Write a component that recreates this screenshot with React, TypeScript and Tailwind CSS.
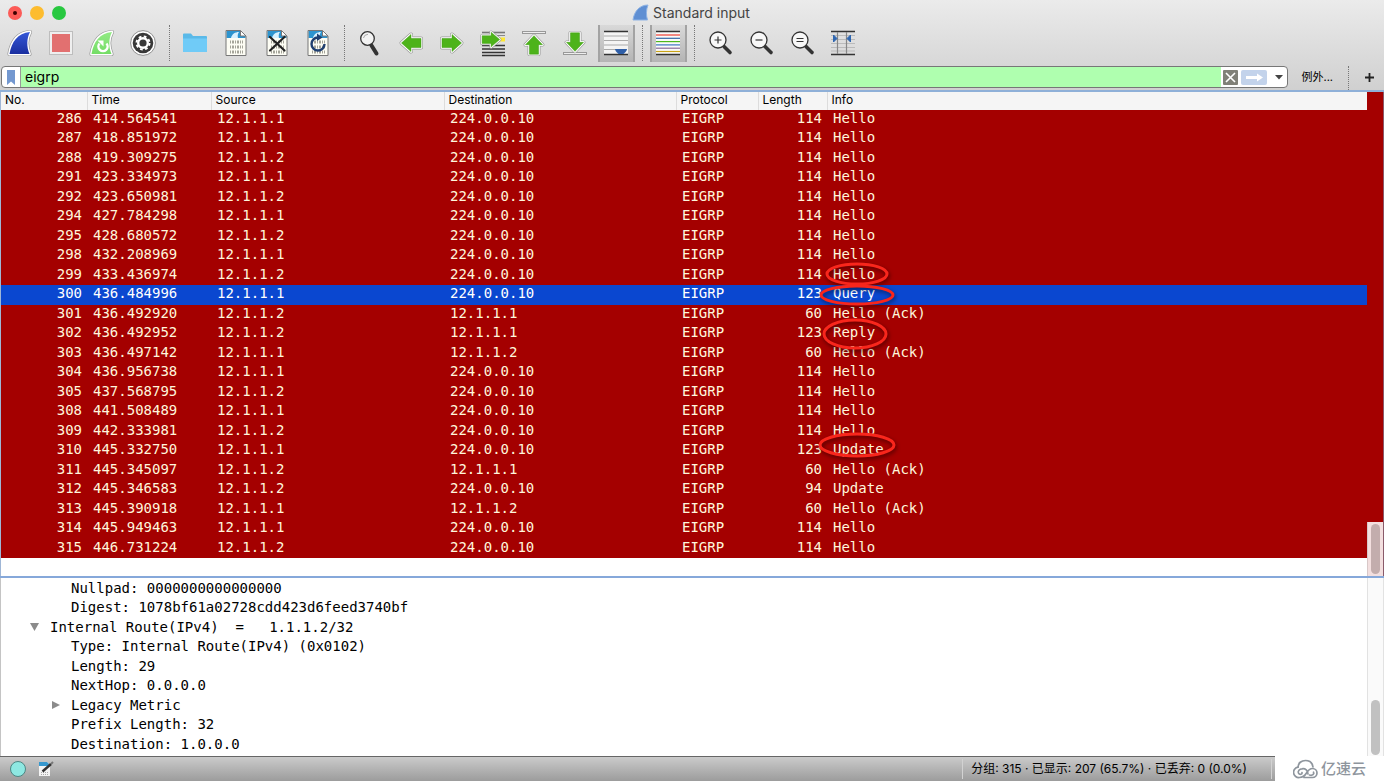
import type { ReactNode } from "react";
import clsx from "clsx";

type Packet = [no: number, time: string, source: string, destination: string, length: number, info: string];

const GROUP = "224.0.0.10";
const R1 = "12.1.1.1";
const R2 = "12.1.1.2";

const packets: Packet[] = [
  [286, "414.564541", R1, GROUP, 114, "Hello"],
  [287, "418.851972", R1, GROUP, 114, "Hello"],
  [288, "419.309275", R2, GROUP, 114, "Hello"],
  [291, "423.334973", R1, GROUP, 114, "Hello"],
  [292, "423.650981", R2, GROUP, 114, "Hello"],
  [294, "427.784298", R1, GROUP, 114, "Hello"],
  [295, "428.680572", R2, GROUP, 114, "Hello"],
  [298, "432.208969", R1, GROUP, 114, "Hello"],
  [299, "433.436974", R2, GROUP, 114, "Hello"],
  [300, "436.484996", R1, GROUP, 123, "Query"],
  [301, "436.492920", R2, R1, 60, "Hello (Ack)"],
  [302, "436.492952", R2, R1, 123, "Reply"],
  [303, "436.497142", R1, R2, 60, "Hello (Ack)"],
  [304, "436.956738", R1, GROUP, 114, "Hello"],
  [305, "437.568795", R2, GROUP, 114, "Hello"],
  [308, "441.508489", R1, GROUP, 114, "Hello"],
  [309, "442.333981", R2, GROUP, 114, "Hello"],
  [310, "445.332750", R1, GROUP, 123, "Update"],
  [311, "445.345097", R2, R1, 60, "Hello (Ack)"],
  [312, "445.346583", R2, GROUP, 94, "Update"],
  [313, "445.390918", R1, R2, 60, "Hello (Ack)"],
  [314, "445.949463", R1, GROUP, 114, "Hello"],
  [315, "446.731224", R2, GROUP, 114, "Hello"],
];

const columns = ["No.", "Time", "Source", "Destination", "Protocol", "Length", "Info"];

const details: { text: string; top?: boolean; arrow?: "open" | "closed" }[] = [
  { text: "Nullpad: 0000000000000000" },
  { text: "Digest: 1078bf61a02728cdd423d6feed3740bf" },
  { text: "Internal Route(IPv4)  =   1.1.1.2/32", top: true, arrow: "open" },
  { text: "Type: Internal Route(IPv4) (0x0102)" },
  { text: "Length: 29" },
  { text: "NextHop: 0.0.0.0" },
  { text: "Legacy Metric", arrow: "closed" },
  { text: "Prefix Length: 32" },
  { text: "Destination: 1.0.0.0" },
];

// Row height averages 19.5px, so rows alternate between 19px and 20px.
const rowHeight = (index: number) => (index % 2 === 0 ? "h-[19px]" : "h-5");

function Icon({ children }: { children: ReactNode }) {
  return (
    <svg viewBox="0 0 28 28" className="size-7" fill="none" aria-hidden="true">
      {children}
    </svg>
  );
}

const FIN = "M3.5 25C5.500 13 11.500 4 24 3C20.500 9.500 20.500 18 23.500 25Z";

function FinIcon({ from, to, children }: { from: string; to: string; children?: ReactNode }) {
  return (
    <Icon>
      <defs>
        <linearGradient id={`fin-${from}`} x1="0" y1="0" x2="0" y2="1">
          <stop stopColor={`#${from}`} />
          <stop offset="1" stopColor={`#${to}`} />
        </linearGradient>
      </defs>
      <path d={FIN} stroke="#9a9a9a" strokeWidth="4.2" strokeLinejoin="round" />
      <path d={FIN} stroke="#fff" strokeWidth="2.8" strokeLinejoin="round" />
      <path d={FIN} fill={`url(#fin-${from})`} />
      {children}
    </Icon>
  );
}

function StopIcon() {
  return (
    <Icon>
      <rect x="2.5" y="2.5" width="23" height="23" fill="#efefef" stroke="#bdbdbd" />
      <rect x="5" y="5" width="18" height="18" fill="#e27070" />
    </Icon>
  );
}

function OptionsIcon() {
  return (
    <Icon>
      <circle cx="14" cy="14" r="12.4" fill="#fff" stroke="#8f8f8f" />
      <circle cx="14" cy="14" r="10.3" fill="#383838" />
      <circle cx="14" cy="14" r="4.8" stroke="#fff" strokeWidth="2.4" />
      <circle cx="14" cy="14" r="6.500" stroke="#fff" strokeWidth="2" strokeDasharray="2.7 2.405" />
    </Icon>
  );
}

function FolderIcon() {
  return (
    <Icon>
      <path d="M2 5.5Q2 4.5 3 4.5H10L12 7H25Q26 7 26 8V22Q26 23 25 23H3Q2 23 2 22Z" fill="#5ab9e8" />
      <path d="M2 9.5H26V22Q26 23 25 23H3Q2 23 2 22Z" fill="#70cbf7" />
    </Icon>
  );
}

function CaptureFileIcon({ children }: { children?: ReactNode }) {
  return (
    <Icon>
      <path d="M4 1.5H18.5L24 7V26.5H4Z" fill="#fdfdf4" />
      <path d="M4.5 2H18.5L23.5 7V9H4.5Z" fill="#2d94cf" />
      <path d="M9 9C10 5 13 3 17 3C15.5 5 15.5 7 16 9Z" fill="#d8f1ff" />
      <path d="M18.5 1.5V7H24Z" fill="#fff" />
      <path d="M4 1.5H18.5L24 7V26.5H4ZM18.5 1.5V7H24" stroke="#777" />
      <path d="M8 13H21M8 18H21M8 23H21" stroke="#a5a59a" strokeWidth="3" strokeDasharray="1 1 2 1" />
      {children}
    </Icon>
  );
}

function MagnifierIcon() {
  return (
    <Icon>
      <path d="M15.5 16.5L20.5 24.5" stroke="#333" strokeWidth="4" strokeLinecap="round" />
      <circle cx="11.5" cy="9.5" r="6.8" fill="#f3f3f3" stroke="#333" strokeWidth="1.3" />
      <path d="M7.5 9Q8 5.5 12 5.3" stroke="#aaa" />
    </Icon>
  );
}

function ZoomIcon({ sign }: { sign: string }) {
  return (
    <Icon>
      <path d="M18 17.5L24 23.5" stroke="#333" strokeWidth="3.6" strokeLinecap="round" />
      <circle cx="12" cy="11" r="8" fill="#f8f8f8" stroke="#333" strokeWidth="1.3" />
      <path d={sign} stroke="#333" strokeWidth="1.2" />
    </Icon>
  );
}

function ArrowShape({ transform }: { transform?: string }) {
  const d = "M4 9.500H14V5.500L23.500 14L14 22.500V18.500H4Z";
  return (
    <g transform={transform}>
      <path d={d} stroke="#9a9a9a" strokeWidth="4" strokeLinejoin="round" />
      <path d={d} fill="#4db31a" stroke="#fff" strokeWidth="2.6" strokeLinejoin="round" />
      <path d={d} fill="#4db31a" stroke="#3d9a10" strokeWidth=".5" />
    </g>
  );
}

function GoToPacketIcon() {
  return (
    <Icon>
      <path d="M3 3.500H26" stroke="#777" strokeWidth="1.600" />
      <path d="M3 16.500H26M3 20H26M3 23.500H26M3 26.500H26" stroke="#333" strokeWidth="1.4" />
      <path d="M3 6.500H26" stroke="#888" />
      <path d="M18 10.5H26" stroke="#ffe92e" strokeWidth="4" />
      <ArrowShape transform="translate(-.5 -1.500) scale(.9 .86)" />
    </Icon>
  );
}

function AutoScrollIcon() {
  return (
    <Icon>
      <rect x="2" y="2" width="24" height="24" fill="#f4f4f4" />
      <path d="M2 2.5H26M2 25.5H26" stroke="#333" strokeWidth="1.6" />
      <path d="M2 7H26M2 11.5H26M2 16H26M2 20.5H14" stroke="#aaa" />
      <path d="M13 20H25Q25 22 21.5 25H16.5Q13 22 13 20Z" fill="#2f5fa8" />
    </Icon>
  );
}

function ColorizeIcon() {
  const stripes = ["#ef3b2f", "#3465a4", "#4fb81c", "#3b74c0", "#8a6a9a", "#c9a417"];
  return (
    <Icon>
      <rect x="2" y="2" width="24" height="24" fill="#fafafa" />
      <path d="M2 2.5H26M2 25.5H26" stroke="#333" strokeWidth="1.6" />
      {stripes.map((color, i) => (
        <path key={color} d={`M2 ${6 + i * 3.3}H26`} stroke={color} strokeWidth="1.2" />
      ))}
    </Icon>
  );
}

function ResizeColumnsIcon() {
  return (
    <Icon>
      <path d="M2 6.5H26M2 10.5H26M2 14.5H26M2 18.5H26M2 22H26" stroke="#bbb" />
      <path d="M2 2.5H26M2 25.5H26" stroke="#333" strokeWidth="1.4" />
      <path d="M8.5 3V25M17.5 3V25" stroke="#888" strokeWidth="1.2" />
      <path d="M4.500 6L8 9.500L4.500 13ZM21.500 6L18 9.500L21.500 13Z" fill="#2f66b0" stroke="#2f66b0" />
    </Icon>
  );
}

function ToolButton({ label, pressed, children }: { label: string; pressed?: boolean; children: ReactNode }) {
  return (
    <button
      type="button"
      aria-label={label}
      aria-pressed={pressed}
      className={clsx(
        "mx-0.5 flex h-[37px] w-[37px] items-center justify-center pr-px pb-px",
        pressed && "border-x-2 border-[#a3a3a3] bg-linear-to-b from-[#d9d9d9] to-[#b4b4b4]",
      )}
    >
      {children}
    </button>
  );
}

function Separator() {
  return <div className="mx-[5px] h-9 w-px border-l border-dotted border-[#777]" />;
}

function TitleBar() {
  return (
    <div className="relative flex h-[25px] items-center justify-center">
      <div className="absolute left-2 flex gap-2">
        <button type="button" aria-label="Close" className="flex size-[14px] items-center justify-center rounded-full bg-[#fc5b57]">
          <span className="size-1 rounded-full bg-[#3c0000]" />
        </button>
        <button type="button" aria-label="Minimize" className="size-[14px] rounded-full bg-[#fdbc2e]" />
        <button type="button" aria-label="Zoom" className="size-[14px] rounded-full bg-[#28c840]" />
      </div>
      <div className="flex items-center gap-1 pr-0.5 text-sm text-[#444]">
        <svg viewBox="0 0 17 17" className="size-[17px]" aria-hidden="true">
          <path d="M1 16C2 8 7 1 16 1C14 6 14 11 15.500 16Z" fill="#5f8fd3" stroke="#8fb3e4" />
        </svg>
        <h1>Standard input</h1>
      </div>
    </div>
  );
}

function Toolbar() {
  return (
    <div className="flex h-[41px] items-start">
      <ToolButton label="Start capture">
        <FinIcon from="3457d8" to="1a2fa0" />
      </ToolButton>
      <ToolButton label="Stop capture">
        <StopIcon />
      </ToolButton>
      <ToolButton label="Restart capture">
        <FinIcon from="93ea85" to="74dd66">
          <path d="M11.500 14.500A4.600 4.600 0 1 0 18.500 14.500" stroke="#fff" strokeWidth="2.4" />
          <path d="M9.500 11.500H15.500V17.500Z" fill="#fff" />
        </FinIcon>
      </ToolButton>
      <ToolButton label="Capture options">
        <OptionsIcon />
      </ToolButton>
      <Separator />
      <ToolButton label="Open">
        <FolderIcon />
      </ToolButton>
      <ToolButton label="Save">
        <CaptureFileIcon />
      </ToolButton>
      <ToolButton label="Close file">
        <CaptureFileIcon>
          <path d="M7 8L21.500 21.500M21.500 8L7 21.500" stroke="#222" strokeWidth="2.2" strokeLinecap="round" />
        </CaptureFileIcon>
      </ToolButton>
      <ToolButton label="Reload">
        <CaptureFileIcon>
          <path d="M14 8.500A6.500 6.500 0 1 0 20.500 15" stroke="#1f3f70" strokeWidth="2.4" />
          <path d="M13 4.500L18.500 8.500L13 12Z" fill="#1f3f70" />
        </CaptureFileIcon>
      </ToolButton>
      <Separator />
      <ToolButton label="Find packet">
        <MagnifierIcon />
      </ToolButton>
      <ToolButton label="Previous packet">
        <Icon>
          <ArrowShape transform="matrix(-1 0 0 1 28 0)" />
        </Icon>
      </ToolButton>
      <ToolButton label="Next packet">
        <Icon>
          <ArrowShape />
        </Icon>
      </ToolButton>
      <ToolButton label="Go to packet">
        <GoToPacketIcon />
      </ToolButton>
      <ToolButton label="First packet">
        <Icon>
          <rect x="2.500" y="2.500" width="23" height="2" fill="#eee" stroke="#999" />
          <ArrowShape transform="translate(0 29) rotate(-90) scale(.95 1)" />
        </Icon>
      </ToolButton>
      <ToolButton label="Last packet">
        <Icon>
          <rect x="2.500" y="23.500" width="23" height="2" fill="#eee" stroke="#999" />
          <ArrowShape transform="translate(28 0) rotate(90) scale(.95 1)" />
        </Icon>
      </ToolButton>
      <ToolButton label="Auto scroll" pressed>
        <AutoScrollIcon />
      </ToolButton>
      <Separator />
      <ToolButton label="Colorize" pressed>
        <ColorizeIcon />
      </ToolButton>
      <Separator />
      <ToolButton label="Zoom in">
        <ZoomIcon sign="M8.500 11H15.500M12 7.500V14.500" />
      </ToolButton>
      <ToolButton label="Zoom out">
        <ZoomIcon sign="M8.500 11H15.500" />
      </ToolButton>
      <ToolButton label="Normal size">
        <ZoomIcon sign="M8.500 9.500H15.500M8.500 12.500H15.500" />
      </ToolButton>
      <ToolButton label="Resize columns">
        <ResizeColumnsIcon />
      </ToolButton>
    </div>
  );
}

function FilterBar() {
  return (
    <div className="flex h-6 items-start pl-px">
      <div className="flex h-[22px] flex-1 items-stretch overflow-hidden rounded-[4px] border border-[#777] bg-white">
        <button type="button" aria-label="Filter bookmarks" className="flex w-[19px] items-center justify-center border-r border-[#999]">
          <svg viewBox="0 0 10 15" className="h-[15px] w-[10px]" aria-hidden="true">
            <path d="M1 0H9V15L5 11.500L1 15Z" fill="#7398d0" />
          </svg>
        </button>
        <input aria-label="Display filter" defaultValue="eigrp" className="min-w-0 flex-1 bg-[#afffaf] pl-1 text-sm text-black outline-none" />
        <div className="flex items-center gap-[3px] pl-0.5">
          <button type="button" aria-label="Clear filter">
            <svg viewBox="0 0 15 15" className="size-[15px]" aria-hidden="true">
              <rect width="15" height="15" rx="1" fill="#808078" />
              <path d="M3 3L12 12M12 3L3 12" stroke="#fff" strokeWidth="1.600" />
            </svg>
          </button>
          <button type="button" aria-label="Apply filter">
            <svg viewBox="0 0 26 15" className="h-[15px] w-[26px]" aria-hidden="true">
              <rect width="26" height="15" rx="2" fill="#c3d3eb" />
              <path d="M5 6H16V3.500L22 7.500L16 11.500V9H5Z" fill="#fff" />
            </svg>
          </button>
          <button type="button" aria-label="Recent filters" className="flex w-[17px] justify-center">
            <svg viewBox="0 0 8 5" className="h-[5px] w-2" aria-hidden="true">
              <path d="M0 0H8L4 4.500Z" fill="#444" />
            </svg>
          </button>
        </div>
      </div>
      <button type="button" className="ml-[13px] h-[22px] text-[11px] text-black">
        例外...
      </button>
      <div className="ml-[15px] h-6 w-px border-l border-dotted border-[#777]" />
      <button type="button" aria-label="Add filter button" className="ml-4 mr-[10px] flex h-[22px] items-center">
        <svg viewBox="0 0 9 9" className="size-[9px]" aria-hidden="true">
          <path d="M4.500 0V9M0 4.500H9" stroke="#222" strokeWidth="1.800" />
        </svg>
      </button>
    </div>
  );
}

// Hand-drawn rings around the neighbour-change exchange.
function Rings() {
  const rings = [
    [856, 182, 30, 10],
    [856, 203, 36, 9],
    [854, 242, 31, 14],
    [856, 353, 37, 11],
  ];
  return (
    <svg className="pointer-events-none absolute inset-0 size-full drop-shadow-[1px_2px_2px_#0008]" fill="none" aria-hidden="true">
      {rings.map(([cx, cy, rx, ry]) => (
        <ellipse key={cy} cx={cx} cy={cy} rx={rx} ry={ry} stroke="#f9261c" strokeWidth="3" />
      ))}
    </svg>
  );
}

function PacketList() {
  return (
    <section className="relative flex h-[484px] border-l border-[#9fb6d6] bg-white">
      <div className="min-w-0 flex-1">
        <table className="w-full table-fixed border-collapse">
          <colgroup>
            <col className="w-[86px]" />
            <col className="w-[124px]" />
            <col className="w-[233px]" />
            <col className="w-[232px]" />
            <col className="w-[82px]" />
            <col className="w-[69px]" />
            <col />
          </colgroup>
          <thead>
            <tr className="h-[18px] bg-[#f5f5f5] text-left text-xs text-black">
              {columns.map((column, i) => (
                <th key={column} className={clsx("p-0 pl-1 align-top leading-4 font-normal", i > 0 && "border-l border-[#dcdcdc]")}>
                  {column}
                </th>
              ))}
            </tr>
          </thead>
          <tbody className="bg-[#a40000] font-['DejaVu_Sans_Mono',monospace] text-sm leading-4 text-[#fff6dc]">
            {packets.map(([no, time, source, destination, length, info], i) => (
              <tr key={no} className={clsx("align-top", rowHeight(i), no === 300 && "bg-[#0a47d0] text-white")}>
                <td className="p-0 pr-[5px] text-right">{no}</td>
                <td className="p-0 pl-[6px]">{time}</td>
                <td className="p-0 pl-[6px]">{source}</td>
                <td className="p-0 pl-[6px]">{destination}</td>
                <td className="p-0 pl-[6px]">EIGRP</td>
                <td className="p-0 pr-[5px] text-right">{length}</td>
                <td className="p-0 pl-[6px]">{info}</td>
              </tr>
            ))}
          </tbody>
        </table>
      </div>
      <div className="flex w-[17px] flex-col border-r border-[#8a5a6a]">
        <div className="flex-1 bg-[#a40000]" />
        <div className="flex h-[54px] justify-center border-l border-[#d8c8c8] bg-[#f3dfdf] py-0.5">
          <div className="w-[9px] rounded-full bg-[#c3adad]" />
        </div>
      </div>
      <Rings />
    </section>
  );
}

function PacketDetails() {
  return (
    <section className="flex flex-1 border-l border-[#c4c4c4] bg-white">
      <ul className="min-w-0 flex-1 font-['DejaVu_Sans_Mono',monospace] text-sm text-black">
        {details.map(({ text, top, arrow }, i) => (
          <li key={text} className={clsx("flex items-center", rowHeight(i), top ? "pl-7" : "pl-[49px]")}>
            <span className="w-[21px]">
              {arrow && (
                <svg viewBox="0 0 11 10" className="h-[10px] w-[11px]" aria-hidden="true">
                  <path d={arrow === "open" ? "M1 1H10L5.500 9Z" : "M2 1L10 5L2 9Z"} fill="#8b8b8b" />
                </svg>
              )}
            </span>
            <span className="whitespace-pre">{text}</span>
          </li>
        ))}
      </ul>
      <div className="flex w-[17px] items-end justify-center border-x border-[#e2e2e2] bg-[#fafafa] pb-px">
        <div className="h-[55px] w-[9px] rounded-full bg-[#c1c1c1]" />
      </div>
    </section>
  );
}

function StatusBar() {
  return (
    <footer className="flex h-[25px]">
      <div className="flex flex-1 items-center border-t border-[#666] bg-linear-to-b from-[#cbcbcb] to-[#9c9c9c] text-xs text-black">
        <button type="button" aria-label="Expert information" className="ml-[10px] size-4 rounded-full border border-[#4d8784] bg-[#8ee8e2]" />
        <button type="button" aria-label="Capture comment" className="ml-3">
          <svg viewBox="0 0 16 16" className="size-4" fill="none" aria-hidden="true">
            <path d="M1 1H9L12 4V15H1Z" fill="#f4f4f4" />
            <path d="M1 1H9L12 4V5H1Z" fill="#3698cf" />
            <path d="M3 11.500H10M3 13.500H10" stroke="#aaa" strokeDasharray="1 1" />
            <path d="M4.500 10.500L13 3" stroke="#333" strokeWidth="2.400" />
            <path d="M13 3L15 1" stroke="#777" strokeWidth="2" />
          </svg>
        </button>
        <div className="ml-auto h-5 w-px bg-[#d2d2d2]" />
        <p className="ml-2 mr-6">分组: 315 · 已显示: 207 (65.7%) · 已丢弃: 0 (0.0%)</p>
        <div className="mr-[3px] h-5 w-px bg-[#d2d2d2]" />
      </div>
      <div className="flex w-[109px] items-center bg-white pl-[18px] text-[15px] leading-4 font-medium text-[#8e959d]">
        <svg viewBox="0 0 26 20" className="mr-0.5 h-5 w-[26px]" fill="none" stroke="#8e959d" strokeWidth="1.700" strokeLinecap="round" aria-hidden="true">
          <path d="M5 8.200A5.200 5.200 0 0 0 6.500 18.500C10 18.500 12 16.500 13.500 14C15 11.500 16.500 9.500 19.500 9.500A4.500 4.500 0 0 1 19.500 18.500H11" />
          <path d="M5 8.200C5 4 8.500 1.500 12.500 1.500C16.500 1.500 19.500 4 20 8" />
          <path d="M15 15A5 5 0 0 0 9 9.800C6.500 9.800 4.500 12 5.500 14.200C6.500 16 9.500 15.500 9 13.500" />
          <path d="M16.500 16C19.500 17 21.500 15 20.500 13.200" />
        </svg>
        亿速云
      </div>
    </footer>
  );
}

export default function App() {
  return (
    <main className="flex min-h-screen flex-col bg-white font-[Inter,'Noto_Sans_CJK_SC',sans-serif]">
      <header className="border-b-2 border-[#8fb0d8] bg-linear-to-b from-[#ebebeb] to-[#d0d0d0]">
        <TitleBar />
        <Toolbar />
        <FilterBar />
      </header>
      <PacketList />
      <div className="h-[2px] bg-[#86a8da]" />
      <PacketDetails />
      <StatusBar />
    </main>
  );
}
